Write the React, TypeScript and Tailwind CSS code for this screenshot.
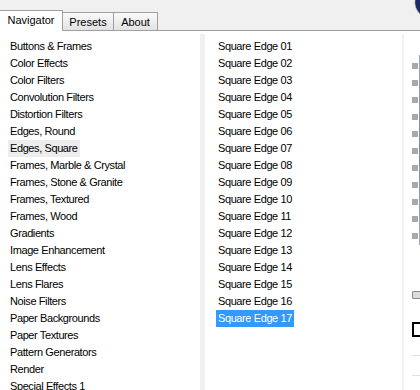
import React from "react";

const left = [
  "Buttons & Frames",
  "Color Effects",
  "Color Filters",
  "Convolution Filters",
  "Distortion Filters",
  "Edges, Round",
  "Edges, Square",
  "Frames, Marble & Crystal",
  "Frames, Stone & Granite",
  "Frames, Textured",
  "Frames, Wood",
  "Gradients",
  "Image Enhancement",
  "Lens Effects",
  "Lens Flares",
  "Noise Filters",
  "Paper Backgrounds",
  "Paper Textures",
  "Pattern Generators",
  "Render",
  "Special Effects 1",
];

const right = Array.from({ length: 17 }, (_, i) => `Square Edge ${String(i + 1).padStart(2, "0")}`);

export default function App() {
  return (
    <div
      className="w-[420px] h-[390px] overflow-hidden bg-[#f0f0f0] text-[11px] text-black flex flex-col"
      style={{ fontFamily: '"Liberation Sans", Arial, sans-serif' }}
    >
      {/* tab strip */}
      <div className="h-[31px] shrink-0 flex items-end border-b border-[#a0a0a0] relative">
        <div className="h-[21px] w-[63px] bg-white border border-b-0 border-[#a0a0a0] border-l-0 -mb-px flex items-center justify-center pb-[1px] relative z-10">
          Navigator
        </div>
        <div className="h-[18px] w-[51px] border border-b-0 border-[#a0a0a0] border-l-0 bg-gradient-to-b from-[#fafafa] to-[#e2e2e2] flex items-center justify-center pt-[2px]">
          Presets
        </div>
        <div className="h-[18px] w-[44px] border border-b-0 border-[#a0a0a0] border-l-0 bg-gradient-to-b from-[#fafafa] to-[#e2e2e2] flex items-center justify-center pt-[2px]">
          About
        </div>
        <div className="flex-1" />
        <svg width="7" height="15" viewBox="0 0 7 15" className="self-start">
          <path d="M7 0 L2 0 Q 1 8 7 14 Z" fill="#1c2a6a" />
          <path d="M2 0 Q 1 8 7 14" stroke="#c8c27a" strokeWidth="0.6" fill="none" />
        </svg>
      </div>

      {/* content */}
      <div className="flex-1 min-h-0 flex bg-white tracking-[-0.4px]">
        <div className="w-[200px] shrink-0 pt-[7px] pl-[8px]">
          {left.map((t) => (
            <div key={t} className="h-[17px] flex items-center">
              <span
                className={
                  "px-[2px] h-[17px] flex items-center " + (t === "Edges, Square" ? "bg-[#ededed]" : "")
                }
              >
                {t}
              </span>
            </div>
          ))}
        </div>
        <div className="w-[5px] shrink-0 bg-[#f0f0f0] mt-[3px]" />
        <div className="w-[197px] shrink-0 pt-[7px] pl-[11px]">
          {right.map((t) => (
            <div key={t} className="h-[17px] flex items-center">
              <span
                className={
                  "px-[2px] h-[17px] flex items-center " +
                  (t === "Square Edge 17" ? "bg-[#3399ff] text-white" : "")
                }
              >
                {t}
              </span>
            </div>
          ))}
        </div>
        <div className="w-[2px] shrink-0 bg-[#f2f2f2] mt-[3px]" />
        <div className="flex-1 pl-[8px] flex flex-col">
          <div className="h-[24px] shrink-0" />
          <div className="flex shrink-0">
            <div className="flex flex-col gap-[11px] pt-[8px]">
              {Array.from({ length: 11 }).map((_, i) => (
                <div key={i} className="w-[6px] h-[6px] bg-[#a9a9a9]" />
              ))}
            </div>
            <div className="w-[2px] h-[190px] bg-gradient-to-b from-[#9aa6bb] via-[#7d889c] to-[#a4acb8] ml-[1px]" />
          </div>
          <div className="h-[46px] shrink-0" />
          <div className="w-[12px] h-[8px] shrink-0 border border-[#8a8a8a] bg-[#dcdcdc] rounded-[1px]" />
          <div className="h-[23px] shrink-0" />
          <div className="w-[12px] h-[15px] shrink-0 border-2 border-black" />
          <div className="h-[18px] shrink-0" />
          <div className="w-[12px] h-px shrink-0 bg-[#e0e0e0]" />
          <div className="h-[19px] shrink-0" />
          <div className="w-[12px] h-px shrink-0 bg-[#e0e0e0]" />
        </div>
      </div>
    </div>
  );
}
